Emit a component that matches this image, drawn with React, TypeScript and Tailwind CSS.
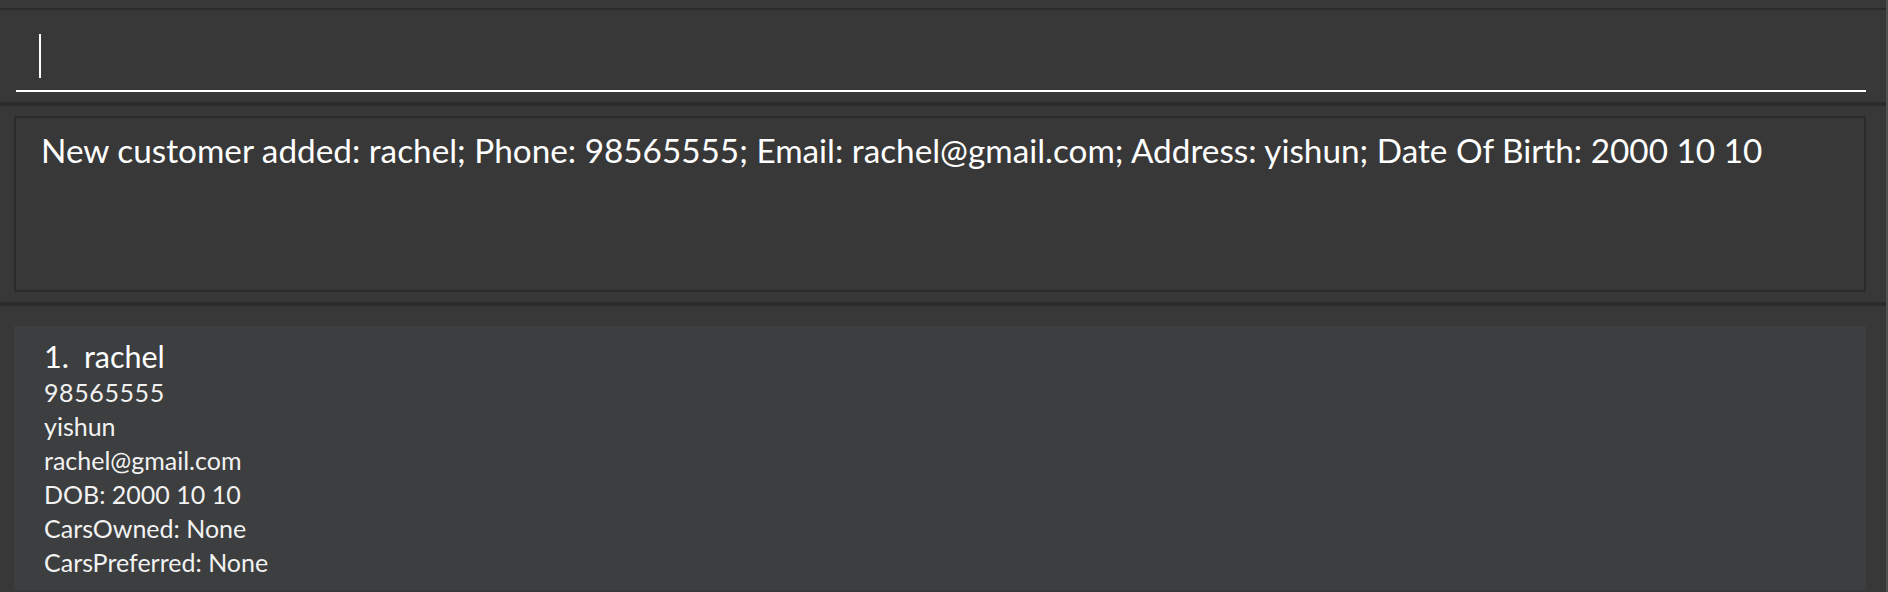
const FONT = 'Lato, "Open Sans", sans-serif';

const RESULT =
  "New customer added: rachel; Phone: 98565555; Email: rachel@gmail.com; Address: yishun; Date Of Birth: 2000 10 10";

export default function App() {
  return (
    <div className="w-[1888px] h-[592px] bg-[#383838] flex overflow-hidden" style={{ fontFamily: FONT }}>
      <div className="w-[1886px] flex flex-col">
        <div className="h-[8px]" />
        <div className="h-[2px] bg-[#2b2b2b]" />
        {/* command box */}
        <div className="h-[92px] pl-[16px] pr-[20px]">
          <div className="h-[82px] border-b-2 border-white pt-[24px] pl-[23px]">
            <div className="w-[2px] h-[44px] bg-white" />
          </div>
        </div>
        <div className="h-[4px] bg-[#2b2b2b]" />
        {/* result display */}
        <div className="h-[196px] pt-[10px] pl-[14px] pr-[20px] pb-[10px]">
          <div className="h-[176px] border-2 border-[#2b2b2b] bg-[#383838] pl-[25px] pt-[12px]">
            <div className="text-white text-[33.3px] leading-[41px] whitespace-nowrap">{RESULT}</div>
          </div>
        </div>
        <div className="h-[4px] bg-[#2b2b2b]" />
        {/* list */}
        <div className="flex-1 pt-[20px] pl-[14px] pr-[20px]">
          <div className="h-[264px] bg-[#3c3e3f] pl-[30px] pt-[13px]">
            <div className="flex text-white text-[30.5px] leading-[35px]">
              <span>1.</span>
              <span className="ml-[15px]">rachel</span>
            </div>
            <div className="mt-[1px] text-[#f2f2f2] text-[25px] leading-[34px]">
              <div className="tracking-[0.6px]">98565555</div>
              <div>yishun</div>
              <div>rachel@gmail.com</div>
              <div>DOB: 2000 10 10</div>
              <div>CarsOwned: None</div>
              <div>CarsPreferred: None</div>
            </div>
          </div>
        </div>
      </div>
      <div className="w-[2px] bg-[#505050]" />
    </div>
  );
}
